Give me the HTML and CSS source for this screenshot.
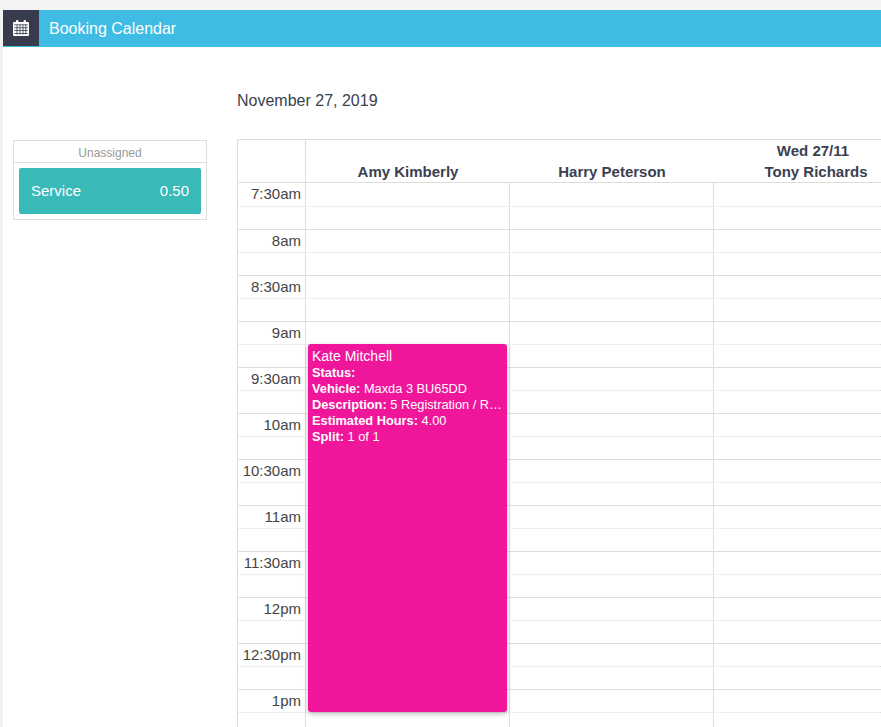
FILE: index.html
```html
<!DOCTYPE html>
<html lang="en">
<head>
<meta charset="utf-8">
<title>Booking Calendar</title>
<link rel="stylesheet" href="styles.css">
</head>
<body>
<div class="app">
  <header class="topbar">
    <div class="topbar-icon">
      <svg width="16" height="16" viewBox="0 0 16 16" aria-hidden="true">
        <rect class="ic-w" x="0" y="2" width="16" height="14" rx="1.2"/>
        <rect class="ic-w" x="3" y="0" width="2.4" height="4.5" rx="1"/>
        <rect class="ic-w" x="10.6" y="0" width="2.4" height="4.5" rx="1"/>
        <rect class="ic-d" x="1.2" y="4.4" width="13.6" height="0.8"/>
        <rect class="ic-d" x="1.2" y="7.4" width="13.6" height="0.8"/>
        <rect class="ic-d" x="1.2" y="10.2" width="13.6" height="0.8"/>
        <rect class="ic-d" x="1.2" y="13" width="13.6" height="0.8"/>
        <rect class="ic-d" x="3.6" y="5" width="0.8" height="9.6"/>
        <rect class="ic-d" x="6.6" y="5" width="0.8" height="9.6"/>
        <rect class="ic-d" x="9.6" y="5" width="0.8" height="9.6"/>
        <rect class="ic-d" x="12.4" y="5" width="0.8" height="9.6"/>
      </svg>
    </div>
    <h1 class="topbar-title">Booking Calendar</h1>
  </header>
  <div class="content">
    <aside class="sidebar">
      <div class="panel">
        <div class="panel-title">Unassigned</div>
        <div class="panel-body">
          <div class="job"><span>Service</span><span>0.50</span></div>
        </div>
      </div>
    </aside>
    <main class="main">
      <div class="date">November 27, 2019</div>
      <div class="calendar">
        <div class="cal-head">
          <div class="head-gutter"></div>
          <div class="head-days">
            <div class="day-title">Wed 27/11</div>
            <div class="staff">
              <div class="staff-name">Amy Kimberly</div>
              <div class="staff-name">Harry Peterson</div>
              <div class="staff-name">Tony Richards</div>
            </div>
          </div>
        </div>
        <div class="slot first"><div class="time">7:30am</div><div class="cell"></div><div class="cell"></div><div class="cell"></div></div>
        <div class="slot half"><div class="time"></div><div class="cell"></div><div class="cell"></div><div class="cell"></div></div>
        <div class="slot"><div class="time">8am</div><div class="cell"></div><div class="cell"></div><div class="cell"></div></div>
        <div class="slot half"><div class="time"></div><div class="cell"></div><div class="cell"></div><div class="cell"></div></div>
        <div class="slot"><div class="time">8:30am</div><div class="cell"></div><div class="cell"></div><div class="cell"></div></div>
        <div class="slot half"><div class="time"></div><div class="cell"></div><div class="cell"></div><div class="cell"></div></div>
        <div class="slot"><div class="time">9am</div><div class="cell"></div><div class="cell"></div><div class="cell"></div></div>
        <div class="slot half"><div class="time"></div><div class="cell"></div><div class="cell"></div><div class="cell"></div></div>
        <div class="slot"><div class="time">9:30am</div><div class="cell"></div><div class="cell"></div><div class="cell"></div></div>
        <div class="slot half"><div class="time"></div><div class="cell"></div><div class="cell"></div><div class="cell"></div></div>
        <div class="slot"><div class="time">10am</div><div class="cell"></div><div class="cell"></div><div class="cell"></div></div>
        <div class="slot half"><div class="time"></div><div class="cell"></div><div class="cell"></div><div class="cell"></div></div>
        <div class="slot"><div class="time">10:30am</div><div class="cell"></div><div class="cell"></div><div class="cell"></div></div>
        <div class="slot half"><div class="time"></div><div class="cell"></div><div class="cell"></div><div class="cell"></div></div>
        <div class="slot"><div class="time">11am</div><div class="cell"></div><div class="cell"></div><div class="cell"></div></div>
        <div class="slot half"><div class="time"></div><div class="cell"></div><div class="cell"></div><div class="cell"></div></div>
        <div class="slot"><div class="time">11:30am</div><div class="cell"></div><div class="cell"></div><div class="cell"></div></div>
        <div class="slot half"><div class="time"></div><div class="cell"></div><div class="cell"></div><div class="cell"></div></div>
        <div class="slot"><div class="time">12pm</div><div class="cell"></div><div class="cell"></div><div class="cell"></div></div>
        <div class="slot half"><div class="time"></div><div class="cell"></div><div class="cell"></div><div class="cell"></div></div>
        <div class="slot"><div class="time">12:30pm</div><div class="cell"></div><div class="cell"></div><div class="cell"></div></div>
        <div class="slot half"><div class="time"></div><div class="cell"></div><div class="cell"></div><div class="cell"></div></div>
        <div class="slot"><div class="time">1pm</div><div class="cell"></div><div class="cell"></div><div class="cell"></div></div>
        <div class="slot half"><div class="time"></div><div class="cell"></div><div class="cell"></div><div class="cell"></div></div>
        <div class="event">
          <div class="event-name">Kate Mitchell</div>
          <div class="event-line"><b>Status:</b></div>
          <div class="event-line"><b>Vehicle:</b> Maxda 3 BU65DD</div>
          <div class="event-line"><b>Description:</b> 5 Registration / R…</div>
          <div class="event-line"><b>Estimated Hours:</b> 4.00</div>
          <div class="event-line"><b>Split:</b> 1 of 1</div>
        </div>
      </div>
    </main>
  </div>
</div>
</body>
</html>
```
FILE: styles.css
```css
* { box-sizing: border-box; }
html, body { margin: 0; height: 100%; overflow: hidden; }
body {
  background: #f3f3f3;
  font-family: "Liberation Sans", Arial, sans-serif;
  color: #3a3f51;
}
.app { margin: 10px 0 0 3px; height: 717px; background: #fff; overflow: hidden; }
.topbar { display: flex; height: 37px; background: #3ebce3; align-items: flex-start; }
.topbar-icon {
  width: 36px; height: 36px; background: #363b4d;
  display: flex; align-items: center; justify-content: center;
}
.ic-w { fill: #fff; }
.ic-d { fill: #363b4d; }
.topbar-title { margin: 0 0 0 10px; font-size: 16px; font-weight: 400; line-height: 37px; color: #fff; }
.content { display: flex; align-items: flex-start; }
.sidebar { width: 234px; flex: none; padding: 93px 0 0 10px; }
.panel { width: 194px; border: 1px solid #ddd; }
.panel-title {
  height: 22px; padding-top: 1px; border-bottom: 1px solid #ddd; text-align: center;
  font-size: 12px; line-height: 22px; color: #999;
}
.panel-body { padding: 5px; }
.job {
  height: 46px; padding: 0 12px 2px; border-radius: 2px; background: #3ab9b9; color: #fff;
  display: flex; justify-content: space-between; align-items: center; font-size: 15px;
}
.main { flex: none; width: 700px; }
.date { height: 92px; padding-top: 44px; font-size: 16px; line-height: 20px; }
.calendar { position: relative; border-left: 1px solid #ddd; width: 700px; }
.cal-head { display: flex; height: 44px; border-top: 1px solid #ddd; border-bottom: 1px solid #ddd; }
.head-gutter { width: 68px; flex: none; border-right: 1px solid #ddd; }
.head-days { flex: none; width: 612px; }
.day-title { width: 1014px; height: 22px; padding-top: 2px; text-align: center; font-size: 15px; font-weight: 700; line-height: 18px; }
.staff { display: flex; }
.staff-name { width: 204px; text-align: center; font-size: 15px; font-weight: 700; line-height: 20px; }
.slot { display: flex; height: 23px; border-bottom: 1px solid #ddd; }
.slot.first { height: 24px; }
.slot.first, .slot:nth-child(even) { border-bottom-style: dotted; }
.time {
  width: 68px; flex: none; border-right: 1px solid #ddd; padding-right: 4px;
  text-align: right; font-size: 15px; line-height: 21px; color: #444;
}
.cell { width: 204px; flex: none; border-right: 1px solid #ddd; }
.event {
  position: absolute; left: 70px; top: 205px; width: 199px; height: 368px;
  padding: 4px 4px; background: #f0169b; color: #fff; border-radius: 3px;
  box-shadow: 0 2px 5px rgba(0,0,0,.26); font-size: 12.8px; line-height: 16px;
}
.event-name { font-size: 14px; line-height: 17px; }
.event-line { white-space: nowrap; }
```
